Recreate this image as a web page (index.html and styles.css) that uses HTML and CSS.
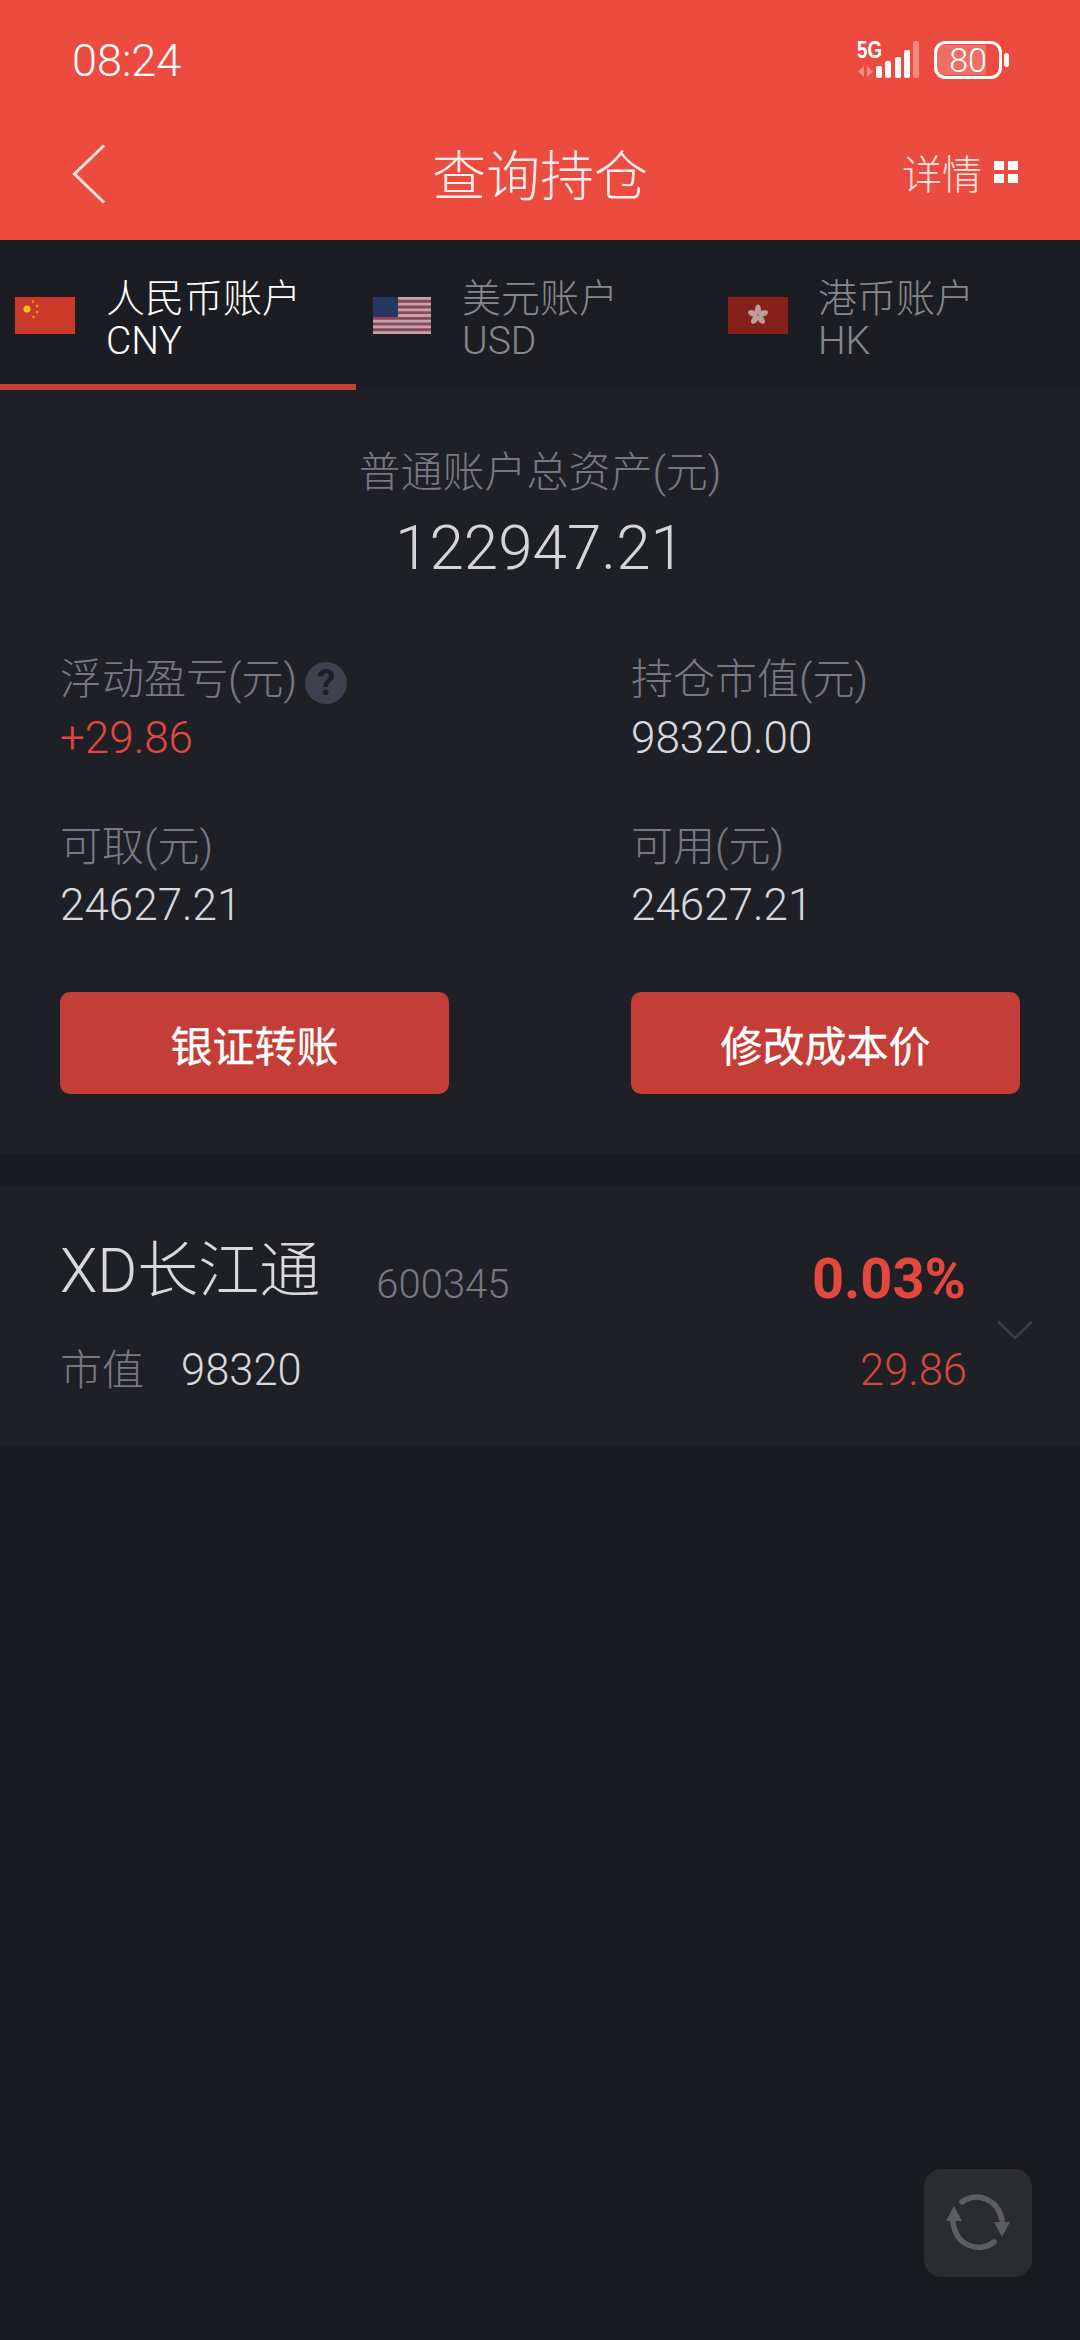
FILE: index.html
```html
<!DOCTYPE html>
<html lang="zh-CN">
<head>
  <meta charset="UTF-8">
  <meta name="viewport" content="width=device-width, initial-scale=1.0">
  <title>查询持仓</title>
  <link rel="stylesheet" href="styles.css">
</head>
<body>
  <header class="top">
    <div class="status">
      <span class="time">08:24</span>
      <svg class="status-icons" width="156" height="50" viewBox="0 -5 156 50">
        <text x="1" y="18" class="net" textLength="25" lengthAdjust="spacingAndGlyphs">5G</text>
        <path d="M8 26v11l-6-5.500zM11 26v11l6-5.500z" fill="#fff" opacity=".35"/>
        <rect x="20" y="26" width="6" height="12" rx="2" fill="#fff"/>
        <rect x="29" y="21" width="6" height="17" rx="2" fill="#fff"/>
        <rect x="39" y="17" width="6" height="21" rx="2" fill="#fff"/>
        <rect x="48" y="10" width="6" height="28" rx="2" fill="#fff"/>
        <rect x="57" y="1" width="6" height="37" rx="2" fill="#fff" opacity=".35"/>
        <rect x="79.500" y="2.500" width="65" height="35" rx="10" fill="none" stroke="#fff" stroke-width="3"/>
        <path d="M84 5h46v30H84a6 6 0 0 1-6-6V11a6 6 0 0 1 6-6z" fill="#fff" opacity=".2"/>
        <text x="112" y="32" class="batt">80</text>
        <rect x="148" y="13" width="5" height="14" rx="2.500" fill="#fff"/>
      </svg>
    </div>
    <nav class="nav">
      <svg class="back" width="34" height="60" viewBox="0 0 34 60">
        <path d="M32 1.500 2.500 30 32 58.500" fill="none" stroke="#fbe3e0" stroke-width="3"/>
      </svg>
      <h1 class="title">查询持仓</h1>
      <div class="detail">
        <span>详情</span>
        <i class="dots"><b></b><b></b><b></b><b></b></i>
      </div>
    </nav>
  </header>

  <div class="tabs">
    <div class="tab active">
      <svg class="flag" width="60" height="37" viewBox="0 0 60 37">
        <rect width="60" height="37" fill="#cb3a28"/>
        <circle cx="12" cy="12" r="3.500" fill="#f5c01e"/>
        <circle cx="18" cy="4.500" r="1.300" fill="#e89a20"/>
        <circle cx="22" cy="9" r="1.300" fill="#e89a20"/>
        <circle cx="22" cy="15" r="1.300" fill="#e89a20"/>
        <circle cx="18.500" cy="20" r="1.300" fill="#e89a20"/>
      </svg>
      <div class="tab-text">人民币账户<br>CNY</div>
    </div>
    <div class="tab">
      <svg class="flag flag-us" width="58" height="37" viewBox="0 0 58 37">
        <rect width="58" height="37" fill="#8e4658"/>
        <path d="M0 1.400h58M0 7.100h58M0 12.800h58M0 18.500h58M0 24.200h58M0 29.900h58M0 35.600h58" stroke="#bda6ad" stroke-width="2.800"/>
        <rect width="25" height="20" fill="#26375f"/>
      </svg>
      <div class="tab-text">美元账户<br>USD</div>
    </div>
    <div class="tab">
      <svg class="flag flag-hk" width="60" height="37" viewBox="0 0 60 37">
        <rect width="60" height="37" fill="#86201b"/>
        <g fill="#bb9d9a">
          <ellipse cx="30" cy="12.500" rx="3" ry="5"/>
          <ellipse cx="30" cy="12.500" rx="3" ry="5" transform="rotate(72 30 18)"/>
          <ellipse cx="30" cy="12.500" rx="3" ry="5" transform="rotate(144 30 18)"/>
          <ellipse cx="30" cy="12.500" rx="3" ry="5" transform="rotate(216 30 18)"/>
          <ellipse cx="30" cy="12.500" rx="3" ry="5" transform="rotate(288 30 18)"/>
        </g>
      </svg>
      <div class="tab-text">港币账户<br>HK</div>
    </div>
  </div>

  <section class="summary">
    <div class="total-label">普通账户总资产(元)</div>
    <div class="total">122947.21</div>
    <div class="stats">
      <div class="stat">
        <div class="label">浮动盈亏(元)<span class="help">?</span></div>
        <div class="value up">+29.86</div>
      </div>
      <div class="stat">
        <div class="label">持仓市值(元)</div>
        <div class="value">98320.00</div>
      </div>
      <div class="stat">
        <div class="label">可取(元)</div>
        <div class="value">24627.21</div>
      </div>
      <div class="stat">
        <div class="label">可用(元)</div>
        <div class="value">24627.21</div>
      </div>
    </div>
    <div class="actions">
      <button class="btn">银证转账</button>
      <button class="btn">修改成本价</button>
    </div>
  </section>

  <section class="position">
    <div class="pos-line">
      <div class="pos-name">XD长江通</div>
      <div class="pos-code">600345</div>
      <div class="pos-pct">0.03%</div>
    </div>
    <div class="pos-line2">
      <div class="pos-label">市值</div>
      <div class="pos-val">98320</div>
      <div class="pos-gain">29.86</div>
    </div>
    <svg class="chevron" width="36" height="20" viewBox="0 0 36 20">
      <path d="M1 1.500 18 18 35 1.500" fill="none" stroke="#3a3d4a" stroke-width="2.500"/>
    </svg>
  </section>

  <div class="refresh">
    <svg width="68" height="60" viewBox="0 0 68 60">
      <g fill="none" stroke="#5c5d62" stroke-width="5.500" stroke-linecap="round">
        <path d="M18 9C32 -2 54 6 58 27"/>
        <path d="M50 49C36 60 12 54 9 29"/>
      </g>
      <path d="M50 29h16l-8 15zM2 28 10 13l8 15z" fill="#5c5d62"/>
    </svg>
  </div>
</body>
</html>
```

FILE: styles.css
```css
* { box-sizing: border-box; }
body { margin: 0; width: 1080px; height: 2340px; position: relative; overflow: hidden; background-color: #1a1b20; font-family: Roboto, "Noto Sans CJK SC", sans-serif; color: #d8d9dc; }

.top { height: 240px; background-color: #ec4b40; color: #fff; }
.status { height: 120px; padding: 0 68px 0 72px; display: flex; align-items: center; justify-content: space-between; }
.time { font-size: 45px; font-weight: 300; }
.status-icons { display: block; }
.net { font-family: "Liberation Sans", sans-serif; font-size: 24px; font-weight: 700; fill: #fff; }
.batt { font-family: Roboto, sans-serif; font-size: 34px; font-weight: 300; fill: #fff; text-anchor: middle; }

.nav { height: 104px; padding: 0 62px 0 72px; display: flex; align-items: center; justify-content: space-between; position: relative; }
.back { display: block; margin-top: 4px; }
.title { position: absolute; left: 0; right: 0; margin: 0; text-align: center; font-size: 54px; font-weight: 300; color: #fdeeec; }
.detail { display: flex; align-items: center; gap: 12px; font-size: 40px; font-weight: 300; color: #fde4e1; }
.dots { display: grid; grid-template-columns: 10px 10px; gap: 4px; }
.dots b { width: 10px; height: 9px; background-color: #fff; }

.tabs { height: 150px; background-color: #1c1d22; display: grid; grid-template-columns: 356px 356px 368px; }
.tab { display: flex; padding-top: 38px; border-bottom: 6px solid transparent; color: #87888c; }
.tab.active { border-bottom-color: #c0403a; color: #fff; }
.flag { flex: none; width: 60px; margin: 19px 31px 0 15px; }
.flag-us { width: 58px; margin-left: 17px; }
.flag-hk { margin-left: 16px; margin-right: 30px; }
.tab-text { font-size: 39px; line-height: 42px; font-weight: 300; }

.summary { height: 765px; padding: 61px 60px 0; background-color: #1f2025; }
.total-label { font-size: 42px; line-height: 44px; text-align: center; font-weight: 300; color: #777881; }
.total { margin-top: 15px; font-size: 62px; line-height: 76px; text-align: center; font-weight: 300; color: #d4d5d9; }
.stats { display: grid; grid-template-columns: 571px 1fr; row-gap: 59px; margin-top: 69px; }
.label { display: flex; align-items: center; font-size: 42px; line-height: 50px; font-weight: 300; color: #777881; }
.help { width: 42px; height: 42px; margin: 6px 0 0 8px; border-radius: 50%; background-color: #3f424e; color: #1f2025; font-size: 36px; line-height: 42px; font-weight: 700; text-align: center; }
.value { margin-top: 8px; font-size: 44px; line-height: 50px; font-weight: 300; }
.value.up { color: #e2483f; }
.actions { display: flex; justify-content: space-between; margin-top: 62px; }
.btn { width: 389px; height: 102px; border: none; border-radius: 10px; background-color: #c43d36; color: #fff; font-family: inherit; font-size: 42px; font-weight: 400; -webkit-text-stroke: 0.4px #fff; padding: 0; }

.position { height: 261px; margin-top: 30px; padding: 48px 0 0 60px; background-color: #1f2025; position: relative; }
.pos-line { display: flex; align-items: flex-end; width: 906px; }
.pos-line2 { display: flex; align-items: baseline; width: 907px; margin-top: 34px; }
.pos-name { font-size: 61px; line-height: 76px; font-weight: 300; }
.pos-code { margin-left: 56px; padding-bottom: 4px; font-size: 40px; line-height: 40px; font-weight: 300; color: #777881; }
.pos-pct { margin-left: auto; padding-bottom: 2px; font-size: 56px; line-height: 56px; font-weight: 700; color: #e2483f; }
.pos-label { font-size: 42px; line-height: 56px; font-weight: 300; color: #777881; }
.pos-val { margin-left: 37px; font-size: 43.5px; font-weight: 300; }
.pos-gain { margin-left: auto; font-size: 43.5px; font-weight: 300; color: #d2473f; }
.chevron { position: absolute; left: 997px; top: 135px; }

.refresh { position: absolute; left: 924px; top: 2169px; width: 108px; height: 108px; border-radius: 18px; background-color: #2b2c30; display: flex; align-items: center; justify-content: center; }
```
